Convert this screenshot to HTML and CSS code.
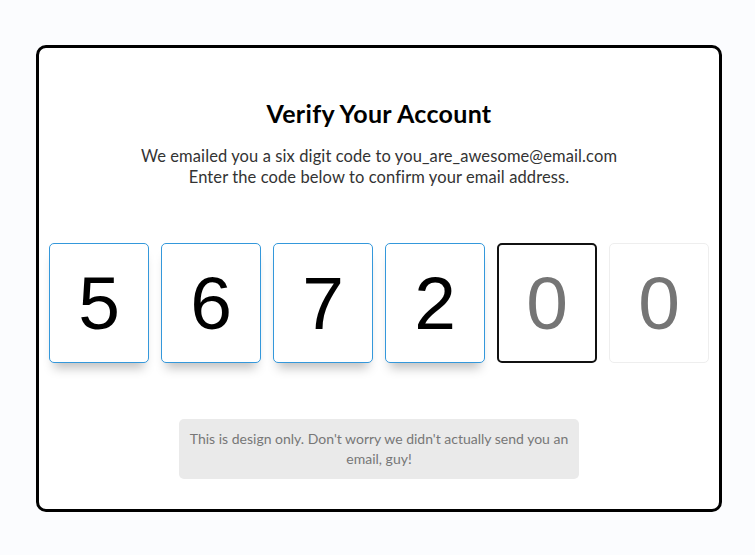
FILE: index.html
```html
<!DOCTYPE html>
<html lang="en">
<head>
<meta charset="utf-8">
<title>Verify Your Account</title>
<link rel="stylesheet" href="styles.css">
</head>
<body>
  <div class="card">
    <h2 class="title">Verify Your Account</h2>
    <p class="lead">We emailed you a six digit code to you_are_awesome@email.com<br>Enter the code below to confirm your email address.</p>
    <div class="code-row">
      <input class="code filled" type="text" maxlength="1" value="5">
      <input class="code filled" type="text" maxlength="1" value="6">
      <input class="code filled" type="text" maxlength="1" value="7">
      <input class="code filled" type="text" maxlength="1" value="2">
      <input class="code active" type="text" maxlength="1" placeholder="0">
      <input class="code" type="text" maxlength="1" placeholder="0">
    </div>
    <div class="info">This is design only. Don't worry we didn't actually send you an email, guy!</div>
  </div>
</body>
</html>
```

FILE: styles.css
```css
html, body {
  margin: 0;
  padding: 0;
}

body {
  background: #fbfcfe;
  font-family: Lato, "Noto Sans", sans-serif;
  min-height: 555px;
}

.card {
  box-sizing: border-box;
  width: 686px;
  margin: 45px 0 0 36px;
  background: #fff;
  border: 3px solid #000;
  border-radius: 10px;
  padding: 30px 0;
  text-align: center;
}

.title {
  margin: 20px 0 0;
  font-size: 25px;
  line-height: 30px;
  letter-spacing: 0.3px;
  font-weight: 700;
  color: #000;
}

.lead {
  margin: 18px 0 0;
  font-size: 16.5px;
  line-height: 21px;
  letter-spacing: 0.1px;
  color: #333;
}

.code-row {
  display: flex;
  justify-content: center;
  gap: 12px;
  margin-top: 55px;
}

.code {
  box-sizing: border-box;
  width: 100px;
  height: 120px;
  margin: 0;
  padding: 0;
  border: 1px solid #eee;
  border-radius: 5px;
  background: #fff;
  font-family: "Liberation Sans", Arial, sans-serif;
  font-size: 75px;
  font-weight: 300;
  text-align: center;
  color: #000;
  outline: none;
}

.code::placeholder {
  color: #757575;
}

.code.filled {
  border-color: #3498db;
  box-shadow: 0 10px 10px -5px rgba(0, 0, 0, 0.25);
}

.code.active {
  border: 2px solid #111;
}

.info {
  display: inline-block;
  box-sizing: border-box;
  max-width: 400px;
  margin-top: 56px;
  padding: 10px;
  background: #eaeaea;
  border-radius: 5px;
  color: #777;
  font-size: 14px;
  line-height: 20px;
}
```
